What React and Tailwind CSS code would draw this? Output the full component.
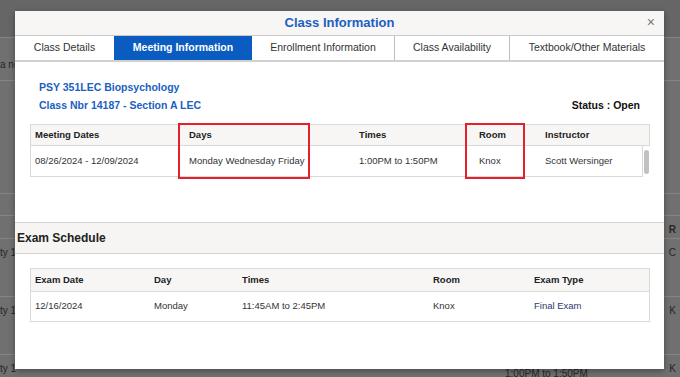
import React from "react"

const font = { fontFamily: '"Liberation Sans", Arial, sans-serif' }

const tabs = [
  { label: "Class Details", w: "w-[99px]" },
  { label: "Meeting Information", w: "w-[138px]", active: true },
  { label: "Enrollment Information", w: "w-[143px]" },
  { label: "Class Availability", w: "w-[115px]" },
  { label: "Textbook/Other Materials", w: "flex-1" },
]

function Backdrop() {
  // the page behind the dimmed overlay
  return (
    <div className="flex flex-col text-[10px] text-[#262626]">
      <div className="h-[37px] bg-[#666]" />
      <div className="h-[43px] border-t border-[#858585] pt-[19px]">a ne</div>
      <div className="h-[113px] border-t border-[#858585]" />
      <div className="h-[22px] border-t border-[#858585]" />
      <div className="flex h-[23px] justify-end border-t border-[#858585] pr-[4px] pt-[6px] font-bold">R</div>
      <div className="flex h-[58px] justify-between border-t border-[#858585] pt-[6px]">
        <span>ty 1</span>
        <span className="pr-[4px]">C</span>
      </div>
      <div className="flex h-[58px] justify-between border-t border-[#858585] pt-[6px]">
        <span>ty 1</span>
        <span className="pr-[4px]">K</span>
      </div>
      <div className="relative flex h-[30px] justify-between border-t border-[#858585] pt-[6px]">
        <span>ty 1</span>
        <span className="pr-[4px]">K</span>
        <span className="absolute left-[505px] top-[14px] leading-none">1:00PM to 1:50PM</span>
      </div>
    </div>
  )
}

function MeetingTable() {
  return (
    <div className="relative ml-[15px] w-[620px]">
      <div className="grid h-[22px] grid-cols-[154px_170px_120px_66px_1fr] items-center border border-[#d9d9d9] bg-[#f7f6f5] text-[9.5px] font-bold text-[#222]">
        <div className="pl-[4px]">Meeting Dates</div>
        <div className="pl-[4px]">Days</div>
        <div className="pl-[4px]">Times</div>
        <div className="pl-[4px]">Room</div>
        <div className="pl-[4px]">Instructor</div>
      </div>
      <div className="flex">
        <div className="grid h-[31px] w-[613px] grid-cols-[154px_170px_120px_66px_1fr] items-center border border-t-0 border-[#d9d9d9] bg-white text-[9.5px] text-[#333]">
          <div className="pl-[4px]">08/26/2024 - 12/09/2024</div>
          <div className="pl-[4px]">Monday Wednesday Friday</div>
          <div className="pl-[4px]">1:00PM to 1:50PM</div>
          <div className="pl-[4px]">Knox</div>
          <div className="pl-[4px]">Scott Wersinger</div>
        </div>
        <div className="flex flex-1 justify-center pt-[4px]">
          <div className="h-[24px] w-[5px] rounded-full bg-[#c1c1c1]" />
        </div>
      </div>
      <div className="absolute left-[148px] top-[-1px] h-[56px] w-[132px] border-2 border-[#e3202b]" />
      <div className="absolute left-[435px] top-[-1px] h-[56px] w-[60px] border-2 border-[#e3202b]" />
    </div>
  )
}

function ExamTable() {
  return (
    <div className="ml-[15px] w-[620px] border border-[#d9d9d9]">
      <div className="grid h-[23px] grid-cols-[119px_88px_191px_101px_1fr] items-center border-b border-[#d9d9d9] bg-[#f7f6f5] text-[9.5px] font-bold text-[#222]">
        <div className="pl-[4px]">Exam Date</div>
        <div className="pl-[4px]">Day</div>
        <div className="pl-[4px]">Times</div>
        <div className="pl-[4px]">Room</div>
        <div className="pl-[4px]">Exam Type</div>
      </div>
      <div className="grid h-[29px] grid-cols-[119px_88px_191px_101px_1fr] items-center bg-white text-[9.5px] text-[#333]">
        <div className="pl-[4px]">12/16/2024</div>
        <div className="pl-[4px]">Monday</div>
        <div className="pl-[4px]">11:45AM to 2:45PM</div>
        <div className="pl-[4px]">Knox</div>
        <div className="pl-[4px] text-[#2b3a6e]">Final Exam</div>
      </div>
    </div>
  )
}

export default function App() {
  return (
    <div className="relative h-[377px] w-[680px] overflow-hidden bg-[#707070]" style={font}>
      <Backdrop />

      <div className="absolute left-[15px] top-[11px] flex h-[358px] w-[649px] flex-col bg-white shadow-[0_2px_6px_rgba(0,0,0,0.35)]">
        {/* header */}
        <div className="relative flex h-[25px] items-center justify-center border-b border-[#c9c9c9] bg-[#f7f6f5]">
          <span className="text-[13px] font-bold text-[#1b5fc1]">Class Information</span>
          <span className="absolute right-[9px] top-[4px] text-[14px] leading-none text-[#777]">×</span>
        </div>

        {/* tabs */}
        <div className="flex h-[26px] border-b-2 border-[#d0d0d0]">
          {tabs.map((t, i) => (
            <div
              key={t.label}
              className={`${t.w} flex items-center justify-center text-[10.5px] ${
                t.active ? "bg-[#0a5cc0] font-bold text-white" : "text-[#333]"
              } ${i < tabs.length - 1 && !t.active && !tabs[i + 1].active ? "border-r border-[#bdbdbd]" : ""}`}
            >
              {t.label}
            </div>
          ))}
        </div>

        {/* class info */}
        <div className="mt-[16px] px-[24px] text-[10.5px] font-bold leading-[18px]">
          <div className="text-[#1b5fc1]">PSY 351LEC Biopsychology</div>
          <div className="flex justify-between">
            <span className="text-[#1b5fc1]">Class Nbr 14187 - Section A LEC</span>
            <span className="text-[#111]">Status : Open</span>
          </div>
        </div>

        <div className="mt-[10px]">
          <MeetingTable />
        </div>

        {/* exam schedule */}
        <div className="mt-[45px] flex h-[32px] items-center border-y border-[#d4d4d4] bg-[#f6f5f3] pl-[2px]">
          <span className="text-[12px] font-bold text-[#222]">Exam Schedule</span>
        </div>

        <div className="mt-[14px]">
          <ExamTable />
        </div>
      </div>
    </div>
  )
}
